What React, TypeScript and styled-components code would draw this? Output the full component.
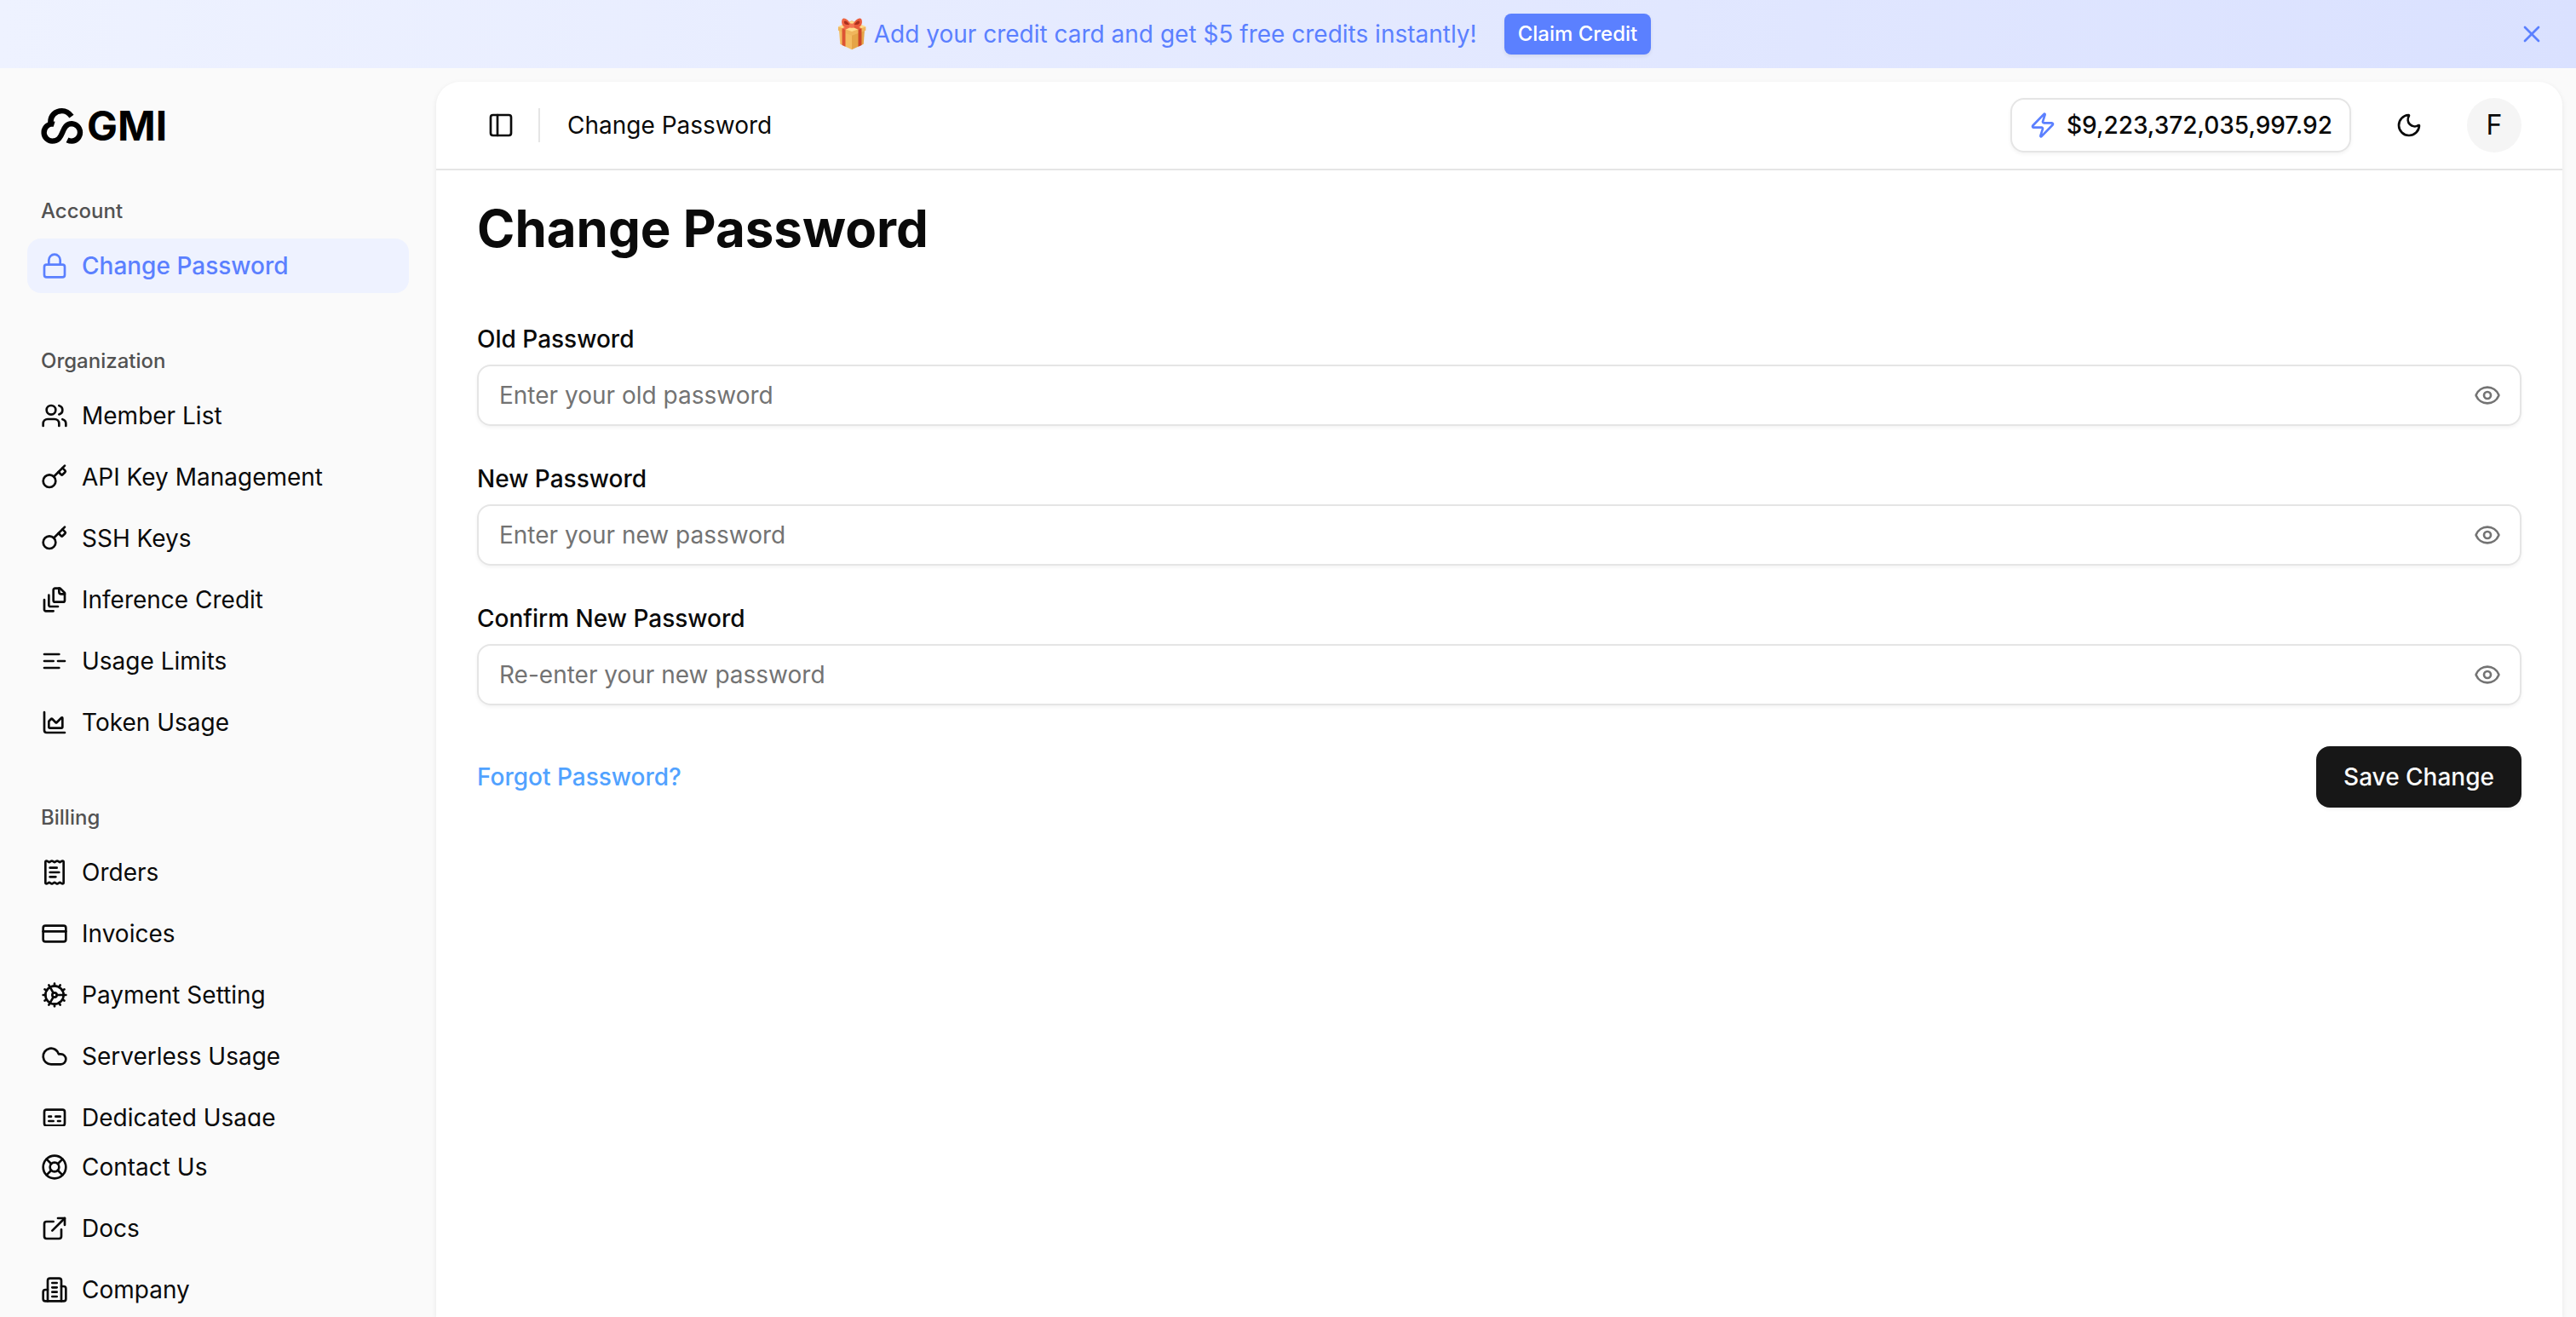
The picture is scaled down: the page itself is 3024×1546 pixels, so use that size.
import React, { useState } from "react";
import type { ComponentType } from "react";
import styled, { createGlobalStyle } from "styled-components";
import {
  Captions, ChartArea, Cloud, Cog, CreditCard, ExternalLink, Eye, EyeOff,
  Key, LifeBuoy, Lock, Moon, PanelLeft, ReceiptText, Users, X, Zap,
} from "lucide-react";

const c = {
  ink: "#0a0a0a",
  soft: "#737373",
  group: "#525252",
  line: "#e5e5e5",
  canvas: "#fafafa",
  brand: "#5b80ff",
  brandSoft: "#eef2ff",
  link: "#51a2ff",
};

const GlobalStyle = createGlobalStyle`
  *, *::before, *::after { box-sizing: border-box; }
  body {
    margin: 0;
    background: ${c.canvas};
    color: ${c.ink};
    font-family: Inter, "Liberation Sans", sans-serif;
    font-size: 28px;
    line-height: 40px;
  }
  button, input { font: inherit; color: inherit; }
  button { border: 0; padding: 0; background: none; cursor: pointer; }
  a { color: inherit; text-decoration: none; }
  h1, h2, p, ul { margin: 0; padding: 0; font: inherit; }
  ul { list-style: none; }
  svg { display: block; flex: none; }
`;

const Shell = styled.div`
  display: flex;
  flex-direction: column;
  height: 100vh;
  overflow: hidden;
`;

const Banner = styled.aside`
  display: flex;
  flex: none;
  height: 80px;
  background: linear-gradient(90deg, #eef2ff, #dae1ff);
  color: ${c.brand};
`;

const BannerContent = styled.div`
  display: flex;
  flex: 1;
  align-items: center;
  justify-content: center;
  gap: 32px;
`;

const BannerText = styled.p`
  display: flex;
  align-items: center;
  gap: 8px;
  white-space: nowrap;
`;

const ClaimButton = styled.button`
  height: 48px;
  padding: 0 16px;
  border-radius: 8px;
  background: ${c.brand};
  color: #fff;
  font-size: 24px;
  line-height: 32px;
  font-weight: 500;
  box-shadow: 0 2px 4px rgba(0, 0, 0, 0.08);
`;

const CloseButton = styled.button`
  display: grid;
  place-items: center;
  width: 104px;
`;

const Body = styled.div`
  display: flex;
  flex: 1;
  min-height: 0;
`;

const Sidebar = styled.nav`
  display: flex;
  flex-direction: column;
  flex: none;
  width: 512px;
`;

const LogoLink = styled.a`
  display: flex;
  align-items: center;
  gap: 4px;
  flex: none;
  height: 136px;
  padding-left: 48px;
  color: #000;
  font-size: 48px;
  line-height: 48px;
  font-weight: 700;
`;

const Groups = styled.div`
  display: flex;
  flex-direction: column;
  gap: 48px;
  flex: 1;
  min-height: 0;
  padding: 0 32px;
  overflow: hidden;
`;

const GroupTitle = styled.h2`
  padding: 16px;
  color: ${c.group};
  font-size: 24px;
  line-height: 32px;
  font-weight: 500;
`;

const Menu = styled.ul`
  display: flex;
  flex-direction: column;
  gap: 8px;
`;

const MenuLink = styled.a<{ $active?: boolean }>`
  display: flex;
  align-items: center;
  gap: 16px;
  height: 64px;
  padding: 0 16px;
  border-radius: 16px;
  background: ${(p) => (p.$active ? c.brandSoft : "transparent")};
  color: ${(p) => (p.$active ? c.brand : c.ink)};
  font-weight: ${(p) => (p.$active ? 500 : 400)};
`;

const SidebarFooter = styled.div`
  flex: none;
  padding: 16px 32px 0;
`;

const Panel = styled.main`
  flex: 1;
  min-width: 0;
  margin: 16px 16px 0 0;
  border-radius: 28px 28px 0 0;
  background: #fff;
  box-shadow: 0 2px 6px rgba(0, 0, 0, 0.08);
`;

const TopBar = styled.header`
  display: flex;
  align-items: center;
  justify-content: space-between;
  height: 104px;
  padding: 0 48px;
  border-bottom: 2px solid ${c.line};
`;

const Cluster = styled.div<{ $gap: number }>`
  display: flex;
  align-items: center;
  gap: ${(p) => p.$gap}px;
`;

const IconButton = styled.button<{ $size: number }>`
  display: grid;
  place-items: center;
  width: ${(p) => p.$size}px;
  height: ${(p) => p.$size}px;
`;

const Crumb = styled.span`
  padding-left: 32px;
  border-left: 2px solid ${c.line};
`;

const Balance = styled.button`
  display: flex;
  align-items: center;
  gap: 12px;
  height: 64px;
  padding: 0 20px;
  border: 2px solid ${c.line};
  border-radius: 16px;
  font-weight: 500;
  box-shadow: 0 2px 4px rgba(0, 0, 0, 0.05);
`;

const Avatar = styled.button`
  width: 64px;
  height: 64px;
  border-radius: 50%;
  background: #f5f5f5;
  font-size: 32px;
`;

const Content = styled.div`
  padding: 32px 48px;
`;

const Title = styled.h1`
  font-size: 60px;
  line-height: 72px;
  font-weight: 700;
`;

const Form = styled.form`
  display: flex;
  flex-direction: column;
  gap: 48px;
  margin-top: 80px;
`;

const Field = styled.div`
  display: flex;
  flex-direction: column;
  gap: 16px;
`;

const Label = styled.label`
  line-height: 28px;
  font-weight: 500;
`;

const InputBox = styled.div`
  display: flex;
  align-items: center;
  height: 72px;
  border: 2px solid ${c.line};
  border-radius: 16px;
  box-shadow: 0 2px 4px rgba(0, 0, 0, 0.05);
`;

const Input = styled.input`
  flex: 1;
  min-width: 0;
  height: 100%;
  padding: 0 24px;
  border: 0;
  outline: 0;
  background: transparent;
  &::placeholder { color: ${c.soft}; opacity: 1; }
`;

const EyeButton = styled.button`
  padding: 0 22px;
  color: ${c.soft};
`;

const Actions = styled.div`
  display: flex;
  align-items: center;
  justify-content: space-between;
`;

const ForgotLink = styled.a`
  color: ${c.link};
  font-weight: 500;
`;

const SaveButton = styled.button`
  height: 72px;
  padding: 0 32px;
  border-radius: 16px;
  background: #171717;
  color: #fafafa;
  font-weight: 500;
  box-shadow: 0 2px 4px rgba(0, 0, 0, 0.05);
`;

type IconProps = { size?: number };

const strokeIcon = (paths: string[]) => ({ size = 24 }: IconProps) => (
  <svg
    width={size}
    height={size}
    viewBox="0 0 24 24"
    fill="none"
    stroke="currentColor"
    strokeWidth="2"
    strokeLinecap="round"
    strokeLinejoin="round"
    aria-hidden="true"
  >
    {paths.map((d) => <path key={d} d={d} />)}
  </svg>
);

const FileLayers = strokeIcon([
  "M21 7h-3a2 2 0 0 1-2-2V2",
  "M21 6v6.5c0 .8-.7 1.5-1.5 1.5h-7c-.8 0-1.5-.7-1.5-1.5v-9c0-.8.7-1.5 1.5-1.5H17Z",
  "M7 8v8.8c0 .3.2.6.4.8.2.2.5.4.8.4H15",
  "M3 12v8.8c0 .3.2.6.4.8.2.2.5.4.8.4H11",
]);

const LimitLines = strokeIcon(["M3 6h13", "M3 12h8", "M15 12h6", "M3 18h13"]);

const Office = strokeIcon([
  "M6 22V4a2 2 0 0 1 2-2h8a2 2 0 0 1 2 2v18Z",
  "M6 12H4a2 2 0 0 0-2 2v6a2 2 0 0 0 2 2h2",
  "M18 9h2a2 2 0 0 1 2 2v9a2 2 0 0 1-2 2h-2",
  "M10 6h4", "M10 10h4", "M10 14h4", "M10 18h4",
]);

const CloudMark = () => (
  <svg width="50" height="42" viewBox="24 33 150 126" fill="none" stroke="currentColor" strokeWidth="19" aria-hidden="true">
    <path d="M132 62C122 48 110 42.500 98 42.500C75 42.500 58 59 58 82V94" />
    <path d="M71 89.500Q66 88 60 88.500A30.500 30.500 0 0 0 64 149C86 149 93 135 100 118S114 87.500 133 87.500A30.800 30.800 0 0 1 133 149Q125 149 117 145" />
  </svg>
);

const Gift = () => (
  <svg width="36" height="38" viewBox="42 38 110 116" role="img" aria-label="Gift">
    <path d="M51 80L97 94V152L55 132Z" fill="#f4bd62" />
    <path d="M143 80L97 94V152L139 132Z" fill="#e5a548" />
    <path d="M48 70L97 48L147 70V83L97 101L48 83Z" fill="#f0b65c" />
    <path d="M48 69L97 50L147 69L97 87Z" fill="#ffdc8c" />
    <path d="M62 75L74 79V141L62 136Z" fill="#dd5433" />
    <path d="M132 75L120 79V141L132 136Z" fill="#cc4529" />
    <path d="M62 75L110 55L120 59L74 80Z" fill="#ef6d4b" />
    <path d="M132 75L84 55L74 59L120 80Z" fill="#e55c3c" />
    <path d="M95 66C84 40 66 34 62 44C57 58 66 72 76 72C84 72 88 66 95 66Z" fill="#ee6543" />
    <path d="M99 66C110 40 128 34 132 44C137 58 128 72 118 72C110 72 106 66 99 66Z" fill="#ea5b3b" />
    <path d="M88 62C80 48 71 46 69 51C68 58 74 65 88 62ZM106 62C114 48 123 46 125 51C126 58 120 65 106 62Z" fill="#a92f1d" />
    <ellipse cx="97" cy="66" rx="9" ry="8" fill="#f37652" />
  </svg>
);

type Item = { label: string; icon: ComponentType<IconProps>; active?: boolean };

const groups: { title: string; items: Item[] }[] = [
  { title: "Account", items: [{ label: "Change Password", icon: Lock, active: true }] },
  {
    title: "Organization",
    items: [
      { label: "Member List", icon: Users },
      { label: "API Key Management", icon: Key },
      { label: "SSH Keys", icon: Key },
      { label: "Inference Credit", icon: FileLayers },
      { label: "Usage Limits", icon: LimitLines },
      { label: "Token Usage", icon: ChartArea },
    ],
  },
  {
    title: "Billing",
    items: [
      { label: "Orders", icon: ReceiptText },
      { label: "Invoices", icon: CreditCard },
      { label: "Payment Setting", icon: Cog },
      { label: "Serverless Usage", icon: Cloud },
      { label: "Dedicated Usage", icon: Captions },
    ],
  },
];

const footerItems: Item[] = [
  { label: "Contact Us", icon: LifeBuoy },
  { label: "Docs", icon: ExternalLink },
  { label: "Company", icon: Office },
];

const MenuList = ({ items }: { items: Item[] }) => (
  <Menu>
    {items.map(({ label, icon: Icon, active }) => (
      <li key={label}>
        <MenuLink href="#" $active={active}>
          <Icon size={32} />
          {label}
        </MenuLink>
      </li>
    ))}
  </Menu>
);

const PasswordField = ({ id, label, placeholder }: { id: string; label: string; placeholder: string }) => {
  const [shown, setShown] = useState(false);
  return (
    <Field>
      <Label htmlFor={id}>{label}</Label>
      <InputBox>
        <Input id={id} type={shown ? "text" : "password"} placeholder={placeholder} />
        <EyeButton type="button" aria-label="Toggle visibility" onClick={() => setShown(!shown)}>
          {shown ? <EyeOff size={32} /> : <Eye size={32} />}
        </EyeButton>
      </InputBox>
    </Field>
  );
};

export default function App() {
  return (
    <Shell>
      <GlobalStyle />
      <Banner>
        <BannerContent>
          <BannerText>
            <Gift />
            Add your credit card and get $5 free credits instantly!
          </BannerText>
          <ClaimButton>Claim Credit</ClaimButton>
        </BannerContent>
        <CloseButton aria-label="Close"><X size={32} /></CloseButton>
      </Banner>
      <Body>
        <Sidebar>
          <LogoLink href="#"><CloudMark />GMI</LogoLink>
          <Groups>
            {groups.map((g) => (
              <section key={g.title}>
                <GroupTitle>{g.title}</GroupTitle>
                <MenuList items={g.items} />
              </section>
            ))}
          </Groups>
          <SidebarFooter><MenuList items={footerItems} /></SidebarFooter>
        </Sidebar>
        <Panel>
          <TopBar>
            <Cluster $gap={16}>
              <IconButton $size={56} aria-label="Toggle sidebar"><PanelLeft size={32} /></IconButton>
              <Crumb>Change Password</Crumb>
            </Cluster>
            <Cluster $gap={32}>
              <Balance><Zap size={32} color={c.brand} />$9,223,372,035,997.92</Balance>
              <IconButton $size={72} aria-label="Dark mode"><Moon size={32} /></IconButton>
              <Avatar>F</Avatar>
            </Cluster>
          </TopBar>
          <Content>
            <Title>Change Password</Title>
            <Form>
              <PasswordField id="old" label="Old Password" placeholder="Enter your old password" />
              <PasswordField id="new" label="New Password" placeholder="Enter your new password" />
              <PasswordField id="confirm" label="Confirm New Password" placeholder="Re-enter your new password" />
              <Actions>
                <ForgotLink href="#">Forgot Password?</ForgotLink>
                <SaveButton type="button">Save Change</SaveButton>
              </Actions>
            </Form>
          </Content>
        </Panel>
      </Body>
    </Shell>
  );
}
